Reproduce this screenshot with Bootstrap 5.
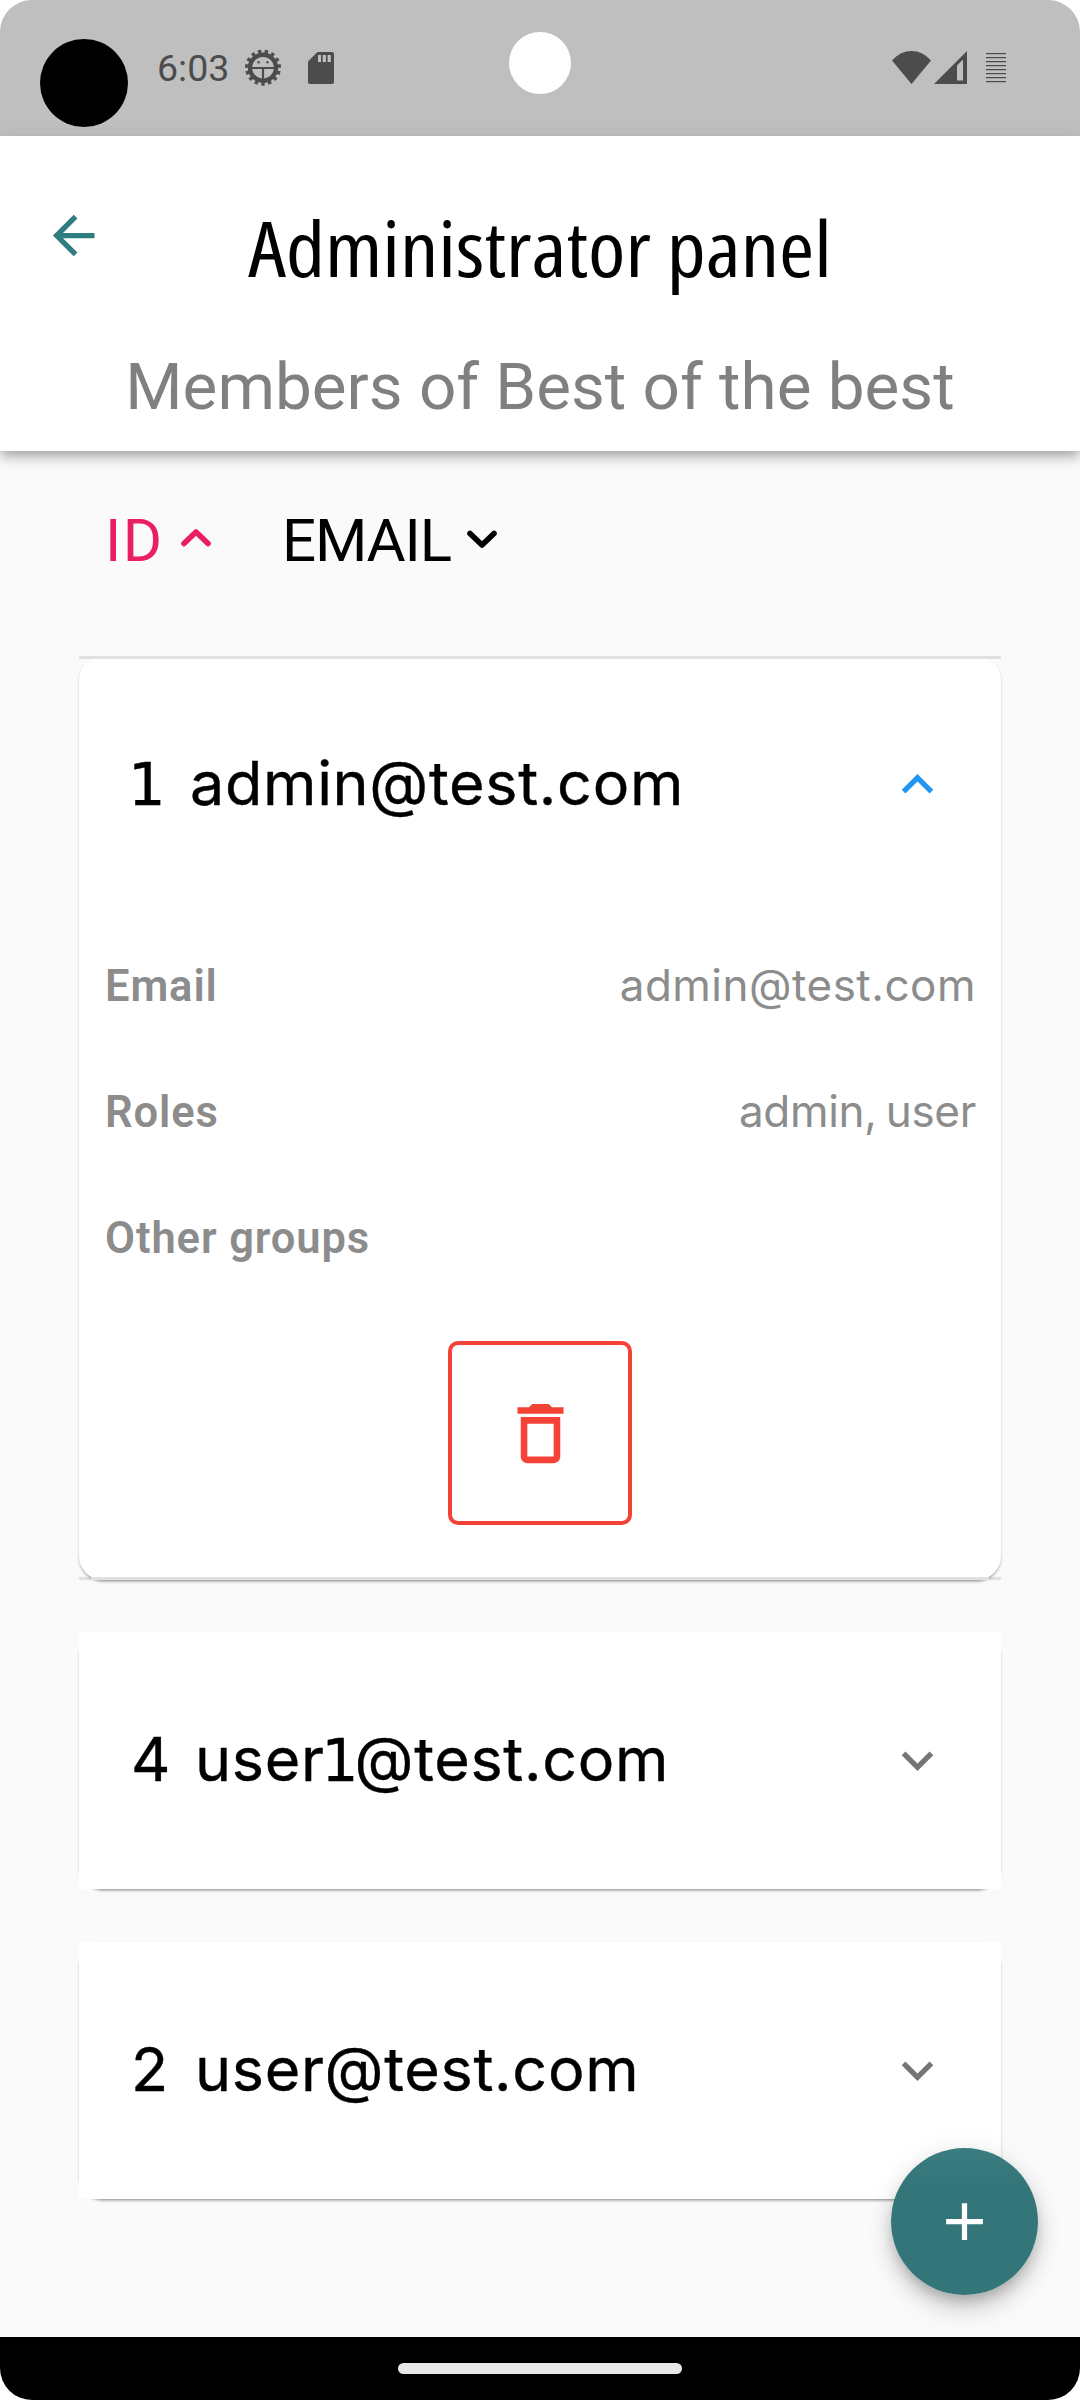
<!DOCTYPE html>
<html lang="en">
<head>
<meta charset="utf-8">
<meta name="viewport" content="width=device-width, initial-scale=1">
<title>Administrator panel</title>
<link rel="stylesheet" href="https://cdn.jsdelivr.net/npm/bootstrap@5.3.0/dist/css/bootstrap.min.css">
<style>
  html, body { background: #fff; }
  body { width: 1080px; height: 2400px; overflow: hidden; color: #000; font-family: Roboto, "Liberation Sans", sans-serif; }
  svg { display: block; flex: none; }
  .screen { width: 1080px; height: 2400px; border-radius: 32px; background: #fafafa; }
  .statusbar { height: 136px; background: #bfbfbf; color: #4c4c4c; padding: 0 74px 0 157px; }
  .clock { font-size: 37.5px; line-height: 138px; }
  .status-left { margin-left: 11px; }
  .blob { width: 88px; height: 88px; left: 40px; top: 39px; background: #000; }
  .camera { width: 62px; height: 62px; left: 509px; top: 32px; background: #fff; }
  .appbar { height: 315px; z-index: 1; box-shadow: 0 5px 9px -2px rgba(0,0,0,.22), 0 9px 11px 0 rgba(0,0,0,.12), 0 3px 22px 0 rgba(0,0,0,.07); }
  .back { left: 42px; top: 68px; color: #2f7d80; }
  .page-title { font-family: "Open Sans", "Noto Sans", sans-serif; font-stretch: 75%; font-size: 77px; line-height: 100px; padding-top: 62px; transform: scaleX(1.105); }
  .page-sub { font-size: 65.6px; line-height: 90px; color: #808080; margin-top: 44px !important; font-weight: 400; }
  .sorting { height: 205px; padding: 0 0 26px 105px; font-size: 60px; }
  .sort-id { color: #e91e63; width: 177px; letter-spacing: 1.5px; }
  .sort-id svg { margin: 0 0 6px 17px; }
  .sort-email { letter-spacing: -1.2px; }
  .sort-email svg { margin: 0 0 3px 16px; }
  .members { padding: 0 79px; }
  .member { background: #fff; border-radius: 24px; box-shadow: 0 3px 3px -2px rgba(0,0,0,.28), 0 2px 3px 0 rgba(0,0,0,.13), 0 1px 3px 0 rgba(0,0,0,.08); }
  .member-open { height: 924px; }
  .open-wrap { background: linear-gradient(#e0e0e0, #e0e0e0) top / 100% 3px no-repeat, linear-gradient(#e0e0e0, #e0e0e0) bottom / 100% 3px no-repeat; margin-bottom: 52px; }
  .open-line { height: 3px; background: #e0e0e0; left: 12px; right: 12px; }
  .member-head { height: 257px; padding: 0 52px 0 52px; font-family: Inter, Roboto, sans-serif; font-size: 61px; letter-spacing: .7px; background: #fff; -webkit-text-stroke: .4px #000; }
  .member-head > span { padding-bottom: 2px; }
  .member-closed { margin-bottom: 53px; }
  .member-num { width: 64px; }
  .member-open .member-num { width: 59px; }
  .foot-one { font-family: "DejaVu Sans", sans-serif; font-size: 59px; line-height: 1; letter-spacing: -2px; }
  .member-open .member-num .foot-one { margin-left: -3px; }
  .email-mid { margin-left: -3px; margin-right: -2px; font-size: 58px; }
  .member-open .member-head { background: transparent; }
  .facts { padding: 10px 25px 0 26px; font-size: 43.5px; color: #8c8c8c; }
  .fact { height: 126px; }
  .fact-name { font-weight: 600; letter-spacing: .9px; padding-top: 1px; }
  .fact-value { font-family: Inter, Roboto, sans-serif; font-size: 44px; letter-spacing: .5px; word-spacing: -3px; padding-bottom: 3px; }
  .fact-roles { letter-spacing: -.3px; }
  .btn-trash { width: 184px; height: 184px; border: 4px solid #f44336; border-radius: 10px; color: #f44336; margin-top: 40px; padding: 0; background: #fff; }
  .fab { width: 147px; height: 147px; left: 891px; top: 2148px; z-index: 3; background: linear-gradient(#3b7c80 0%, #347579 28%, #347579 100%); box-shadow: 0 8px 13px -3px rgba(0,0,0,.2), 0 16px 24px 0 rgba(0,0,0,.13), 0 3px 28px 0 rgba(0,0,0,.09); padding: 0; border: 0; }
  .navpill { height: 63px; background: #000; left: 0; right: 0; bottom: 0; z-index: 2; }
  .pill-bar { width: 284px; height: 11px; background: #e8e8e8; }
</style>
<script src="https://cdn.jsdelivr.net/npm/bootstrap@5.3.0/dist/js/bootstrap.bundle.min.js"></script>
</head>
<body>
<div class="screen position-relative overflow-hidden">

  <div class="statusbar d-flex align-items-center position-relative">
    <div class="blob rounded-circle position-absolute"></div>
    <div class="camera rounded-circle position-absolute"></div>
    <span class="clock">6:03</span>
    <svg class="status-left" width="100" height="40" viewBox="240 48 100 40">
      <g fill="none" stroke="#4c4c4c">
        <circle cx="263" cy="67.7" r="13" stroke-width="4.4"/>
        <circle cx="263" cy="67.7" r="16" stroke-width="4" pathLength="15" stroke-dasharray=".5 .5" stroke-dashoffset="-.5"/>
        <path d="M251 68h24M263 68v13" stroke-width="2.2"/>
      </g>
      <circle cx="258.6" cy="62.2" r="1.2" fill="#4c4c4c"/><circle cx="267.4" cy="62.2" r="1.2" fill="#4c4c4c"/>
      <path fill="#4c4c4c" d="M317.5 52H332a2 2 0 0 1 2 2v28a2 2 0 0 1-2 2h-22a2 2 0 0 1-2-2V61.5z"/>
      <path fill="#bfbfbf" d="M318 55h3v7h-3zM322.7 55h3.2v7h-3.2zM327.6 55h3.2v7h-3.2z"/>
    </svg>
    <svg class="ms-auto" width="116" height="40" viewBox="890 48 116 40">
      <path fill="#4c4c4c" d="M892 60.5Q900 51 911.5 51T931 60.5L911.5 84z"/>
      <path fill="#4c4c4c" fill-rule="evenodd" d="M934 84L967 51V84zM957 65.5V80.5H963V59.5z"/>
      <path stroke="#4c4c4c" d="M986 53.5h20m-20 4h20m-20 4h20m-20 4h20m-20 4h20m-20 4h20m-20 4h20m-20 4h20"/>
      <path stroke="#a4a4a4" d="M986 54.5h20m-20 4h20m-20 4h20m-20 4h20m-20 4h20m-20 4h20m-20 4h20m-20 4h20"/>
    </svg>
  </div>

  <header class="appbar bg-white position-relative text-center">
    <a class="back position-absolute" href="#" aria-label="Back">
      <svg width="63" height="63" viewBox="0 0 24 24" fill="currentColor"><path d="M20 11v2H8l5.5 5.5-1.42 1.42L4.16 12l7.92-7.92L13.5 5.5 8 11h12z"/></svg>
    </a>
    <h1 class="page-title fw-normal m-0">Administrator panel</h1>
    <p class="page-sub m-0">Members of Best of the best</p>
  </header>

  <main>
    <div class="sorting d-flex align-items-center">
      <div class="sort-id d-flex align-items-center">ID
        <svg width="30" height="19" viewBox="0 0 30 19" fill="none" stroke="currentColor" stroke-width="5.6" stroke-linecap="round" stroke-linejoin="round"><path d="M3 15.5L15 4l12 11.5"/></svg>
      </div>
      <div class="sort-email d-flex align-items-center">EMAIL
        <svg width="30" height="19" viewBox="0 0 30 19" fill="none" stroke="currentColor" stroke-width="5.6" stroke-linecap="round" stroke-linejoin="round"><path d="M3 3.5L15 15 27 3.5"/></svg>
      </div>
    </div>

    <div class="members">
      <div class="open-wrap">
        <section class="member member-open position-relative">
          <div class="open-line position-absolute top-0"></div>
          <div class="open-line position-absolute bottom-0"></div>
          <div class="member-head d-flex align-items-center">
            <span class="member-num"><span class="foot-one">1</span></span><span>admin@test.com</span>
            <svg class="ms-auto" width="63" height="63" viewBox="0 0 24 24" fill="#2196f3"><path d="M12 8l-6 6 1.41 1.41L12 10.83l4.59 4.58L18 14z"/></svg>
          </div>
          <div class="facts">
            <div class="fact d-flex align-items-center justify-content-between"><span class="fact-name">Email</span><span class="fact-value">admin@test.com</span></div>
            <div class="fact d-flex align-items-center justify-content-between"><span class="fact-name">Roles</span><span class="fact-value fact-roles">admin, user</span></div>
            <div class="fact d-flex align-items-center justify-content-between"><span class="fact-name">Other groups</span></div>
          </div>
          <div class="d-flex justify-content-center">
            <button class="btn-trash d-flex align-items-center justify-content-center" aria-label="Delete">
              <svg width="79" height="79" viewBox="0 0 24 24" fill="currentColor"><path d="M6 19c0 1.1.9 2 2 2h8c1.1 0 2-.9 2-2V7H6v12zM8 9h8v10H8V9zm7.5-5l-1-1h-5l-1 1H5v2h14V4h-3.5z"/></svg>
            </button>
          </div>
        </section>
      </div>

      <section class="member member-closed">
        <div class="member-head d-flex align-items-center">
          <span class="member-num">4</span><span>user<span class="foot-one email-mid">1</span>@test.com</span>
          <svg class="ms-auto" width="63" height="63" viewBox="0 0 24 24" fill="#757575"><path d="M16.59 8.59L12 13.17 7.41 8.59 6 10l6 6 6-6z"/></svg>
        </div>
      </section>

      <section class="member member-closed">
        <div class="member-head d-flex align-items-center">
          <span class="member-num">2</span><span>user@test.com</span>
          <svg class="ms-auto" width="63" height="63" viewBox="0 0 24 24" fill="#757575"><path d="M16.59 8.59L12 13.17 7.41 8.59 6 10l6 6 6-6z"/></svg>
        </div>
      </section>
    </div>
  </main>

  <button class="fab rounded-circle position-absolute d-flex align-items-center justify-content-center" aria-label="Add">
    <svg width="63" height="63" viewBox="0 0 24 24" fill="#fff"><path d="M19 13h-6v6h-2v-6H5v-2h6V5h2v6h6v2z"/></svg>
  </button>

  <div class="navpill position-absolute d-flex align-items-center justify-content-center">
    <div class="pill-bar rounded-pill"></div>
  </div>
</div>
</body>
</html>
